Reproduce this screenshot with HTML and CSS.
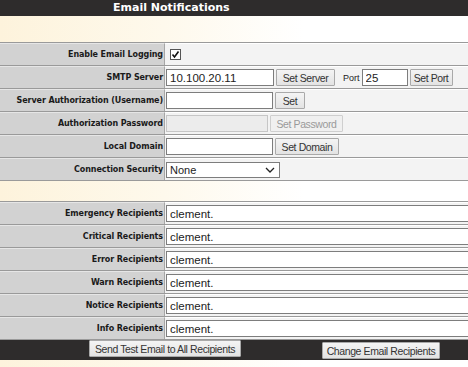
FILE: index.html
```html
<!DOCTYPE html>
<html lang="en">
<head>
    <meta charset="UTF-8">
    <title>Email Notifications</title>
    <link rel="stylesheet" href="styles.css">
</head>
<body>

    <div class="page-title">Email Notifications</div>
    <div class="band band-top"></div>

    <div class="settings">
        <div class="row">
            <div class="label">Enable Email Logging</div>
            <div class="value">
                <span class="checkbox">
                    <svg width="9" height="9" viewBox="0 0 9 9"><path d="M1.5 4.5 L3.5 7 L7.5 1.5" fill="none" stroke="#111" stroke-width="1.6"/></svg>
                </span>
            </div>
        </div>
        <div class="row">
            <div class="label">SMTP Server</div>
            <div class="value">
                <input type="text" class="txt w-server" value="10.100.20.11">
                <button class="btn w-setserver">Set Server</button>
                <span class="port-label">Port</span>
                <input type="text" class="txt w-port" value="25">
                <button class="btn w-setport">Set Port</button>
            </div>
        </div>
        <div class="row">
            <div class="label">Server Authorization (Username)</div>
            <div class="value">
                <input type="text" class="txt w-user">
                <button class="btn w-set">Set</button>
            </div>
        </div>
        <div class="row">
            <div class="label">Authorization Password</div>
            <div class="value">
                <input type="password" class="txt w-pass" disabled>
                <button class="btn w-setpass" disabled>Set Password</button>
            </div>
        </div>
        <div class="row">
            <div class="label">Local Domain</div>
            <div class="value">
                <input type="text" class="txt w-user">
                <button class="btn w-setdomain">Set Domain</button>
            </div>
        </div>
        <div class="row">
            <div class="label">Connection Security</div>
            <div class="value">
                <span class="select-wrap">
                    <select class="sel">
                        <option>None</option>
                        <option>SSL</option>
                        <option>TLS</option>
                    </select>
                    <svg class="chevron" width="10" height="6" viewBox="0 0 10 6"><path d="M1 1 L5 5 L9 1" fill="none" stroke="#222" stroke-width="1.3"/></svg>
                </span>
            </div>
        </div>
    </div>

    <div class="band band-mid"></div>

    <div class="settings">
        <div class="row">
            <div class="label">Emergency Recipients</div>
            <div class="value"><input type="text" class="txt w-mail" value="clement."></div>
        </div>
        <div class="row">
            <div class="label">Critical Recipients</div>
            <div class="value"><input type="text" class="txt w-mail" value="clement."></div>
        </div>
        <div class="row">
            <div class="label">Error Recipients</div>
            <div class="value"><input type="text" class="txt w-mail" value="clement."></div>
        </div>
        <div class="row">
            <div class="label">Warn Recipients</div>
            <div class="value"><input type="text" class="txt w-mail" value="clement."></div>
        </div>
        <div class="row">
            <div class="label">Notice Recipients</div>
            <div class="value"><input type="text" class="txt w-mail" value="clement."></div>
        </div>
        <div class="row">
            <div class="label">Info Recipients</div>
            <div class="value"><input type="text" class="txt w-mail" value="clement."></div>
        </div>
    </div>

    <div class="footer">
        <button class="btn btn-test">Send Test Email to All Recipients</button>
        <button class="btn btn-change">Change Email Recipients</button>
    </div>
    <div class="band band-bottom"></div>

</body>
</html>
```

FILE: styles.css
```css
body {
    margin: 0;
    padding: 0;
    width: 468px;
    overflow: hidden;
    background: #fff;
    font-family: 'DejaVu Sans', Verdana, sans-serif;
}

.page-title {
    height: 16px;
    line-height: 16px;
    background: #2e2c2c;
    color: #fff;
    font-weight: bold;
    font-size: 11px;
    padding-left: 113px;
}

.band {
    background: linear-gradient(to right, #fdf3dc, #fef9ec 35%, #fff 65%);
}

.band-top {
    height: 26px;
}

.band-mid {
    height: 20px;
}

.band-bottom {
    height: 12px;
}

.settings {
    border-top: 1px solid #9a9a9a;
}

.row {
    display: grid;
    grid-template-columns: 165px 1fr;
    height: 22px;
    border-bottom: 1px solid #9a9a9a;
}

.label {
    background: #d2d2d2;
    border-right: 1px solid #a6a6a6;
    border-top: 1px solid #e6e6e6;
    text-align: right;
    font-size: 8px;
    letter-spacing: -0.1px;
    font-weight: bold;
    color: #1a1a1a;
    line-height: 21px;
    padding-right: 1px;
    white-space: nowrap;
}

.value {
    background: #f3f3f3;
    border-top: 1px solid #fff;
    display: flex;
    align-items: center;
    gap: 2px;
    padding-left: 1px;
    white-space: nowrap;
}

.checkbox {
    width: 9px;
    height: 9px;
    border: 1px solid #555;
    background: #fff;
    display: flex;
    align-items: center;
    justify-content: center;
    margin-left: 4px;
}

.txt {
    box-sizing: border-box;
    height: 17px;
    border: 1px solid #7d7d7d;
    background: #fff;
    font-family: 'Liberation Sans', Arial, sans-serif;
    font-size: 11.5px;
    padding: 0 3px;
    color: #222;
    margin: 0;
}

.txt:disabled {
    background: #ececec;
    border-color: #c6c6c6;
}

.w-server { width: 108px; }
.w-port { width: 46px; }
.w-user { width: 107px; }
.w-pass { width: 102px; }
.w-mail { width: 320px; }

.btn {
    box-sizing: border-box;
    height: 17px;
    margin: 0;
    padding: 0;
    border: 1px solid #a9a9a9;
    border-radius: 1px;
    background: linear-gradient(#f4f4f4, #e3e3e3);
    font-family: 'Liberation Sans', Arial, sans-serif;
    font-size: 10.5px;
    letter-spacing: -0.4px;
    color: #333;
    white-space: nowrap;
}

.btn:disabled {
    color: #9a9a9a;
    border-color: #cfcfcf;
    background: #f0f0f0;
}

.w-setserver { width: 59px; }
.w-setport { width: 43px; }
.w-set { width: 30px; }
.w-setpass { width: 73px; }
.w-setdomain { width: 64px; }

.port-label {
    font-family: 'Liberation Sans', Arial, sans-serif;
    font-size: 9px;
    color: #222;
    margin-left: 6px;
}

.select-wrap {
    position: relative;
    display: inline-block;
}

.sel {
    appearance: none;
    box-sizing: border-box;
    width: 114px;
    height: 16px;
    border: 1px solid #7d7d7d;
    background: #fff;
    font-family: 'Liberation Sans', Arial, sans-serif;
    font-size: 11px;
    padding: 0 3px;
    color: #222;
    display: block;
}

.chevron {
    position: absolute;
    right: 5px;
    top: 5px;
}

.footer {
    height: 20px;
    background: #2e2c2c;
    display: flex;
    align-items: flex-start;
}

.btn-test {
    margin-left: 89px;
    width: 152px;
    height: 17px;
}

.btn-change {
    margin-left: 81px;
    margin-top: 2px;
    width: 118px;
    height: 17px;
}
```
